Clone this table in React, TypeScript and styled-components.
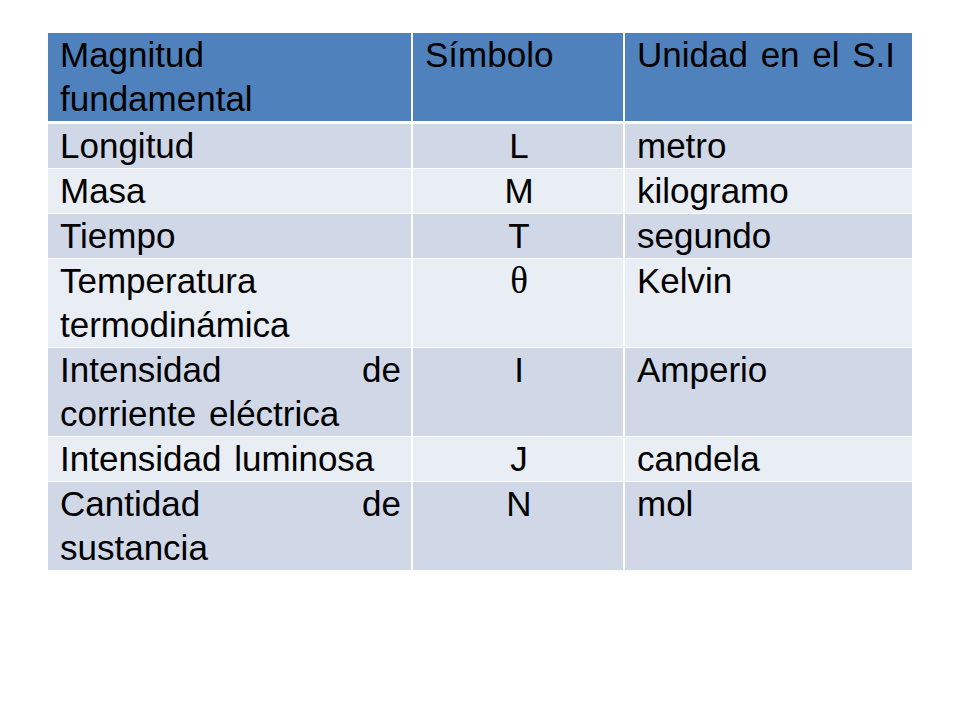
import React from "react";
import styled, { createGlobalStyle } from "styled-components";

const GlobalStyle = createGlobalStyle`
  html, body {
    margin: 0;
    padding: 0;
    background: #ffffff;
  }
`;

const Page = styled.div`
  width: 960px;
  height: 720px;
  box-sizing: border-box;
  padding: 33px 0 0 48px;
  background: #ffffff;
`;

const Table = styled.table`
  width: 864px;
  table-layout: fixed;
  border-collapse: separate;
  border-spacing: 0;
  font-family: "Liberation Sans", Arial, sans-serif;
  font-size: 35px;
  word-spacing: 3px;
  color: #000000;
`;

const Col = styled.col<{ $w: number }>`
  width: ${(p) => p.$w}px;
`;

const HeadCell = styled.th<{ $last?: boolean }>`
  background: #4f81bd;
  font-weight: normal;
  text-align: left;
  vertical-align: top;
  line-height: 44px;
  height: 88px;
  padding: 0 10px 0 12px;
  border-right: ${(p) => (p.$last ? "none" : "2px solid #ffffff")};
  border-bottom: 3px solid #ffffff;
`;

const Cell = styled.td<{ $dark: boolean; $center?: boolean; $last?: boolean; $lastRow?: boolean }>`
  background: ${(p) => (p.$dark ? "#d0d8e8" : "#e9edf4")};
  text-align: ${(p) => (p.$center ? "center" : "left")};
  vertical-align: top;
  line-height: 44px;
  padding: 0 10px 0 12px;
  border-right: ${(p) => (p.$last ? "none" : "2px solid #ffffff")};
  border-bottom: ${(p) => (p.$lastRow ? "none" : "1px solid #ffffff")};
`;

const SpreadLine = styled.div`
  display: flex;
  justify-content: space-between;
`;

const Theta = styled.span`
  font-family: "Liberation Serif", "Times New Roman", serif;
  font-size: 37px;
`;

type Row = {
  name: string[];
  spread?: boolean;
  symbol: React.ReactNode;
  unit: string;
};

const rows: Row[] = [
  { name: ["Longitud"], symbol: "L", unit: "metro" },
  { name: ["Masa"], symbol: "M", unit: "kilogramo" },
  { name: ["Tiempo"], symbol: "T", unit: "segundo" },
  { name: ["Temperatura", "termodinámica"], symbol: <Theta>θ</Theta>, unit: "Kelvin" },
  { name: ["Intensidad de", "corriente eléctrica"], spread: true, symbol: "I", unit: "Amperio" },
  { name: ["Intensidad luminosa"], symbol: "J", unit: "candela" },
  { name: ["Cantidad de", "sustancia"], spread: true, symbol: "N", unit: "mol" },
];

const NameLines = ({ row }: { row: Row }) => (
  <>
    {row.name.map((line, i) =>
      row.spread && i === 0 ? (
        <SpreadLine key={i}>
          {line.split(" ").map((w) => (
            <span key={w}>{w}</span>
          ))}
        </SpreadLine>
      ) : (
        <div key={i}>{line}</div>
      )
    )}
  </>
);

export default function App() {
  return (
    <Page>
      <GlobalStyle />
      <Table>
        <colgroup>
          <Col $w={365} />
          <Col $w={212} />
          <Col $w={287} />
        </colgroup>
        <thead>
          <tr>
            <HeadCell>
              Magnitud
              <br />
              fundamental
            </HeadCell>
            <HeadCell>Símbolo</HeadCell>
            <HeadCell $last>Unidad en el S.I</HeadCell>
          </tr>
        </thead>
        <tbody>
          {rows.map((row, i) => {
            const dark = i % 2 === 0;
            const lastRow = i === rows.length - 1;
            return (
              <tr key={i}>
                <Cell $dark={dark} $lastRow={lastRow}>
                  <NameLines row={row} />
                </Cell>
                <Cell $dark={dark} $center $lastRow={lastRow}>
                  {row.symbol}
                </Cell>
                <Cell $dark={dark} $last $lastRow={lastRow}>
                  {row.unit}
                </Cell>
              </tr>
            );
          })}
        </tbody>
      </Table>
    </Page>
  );
}
